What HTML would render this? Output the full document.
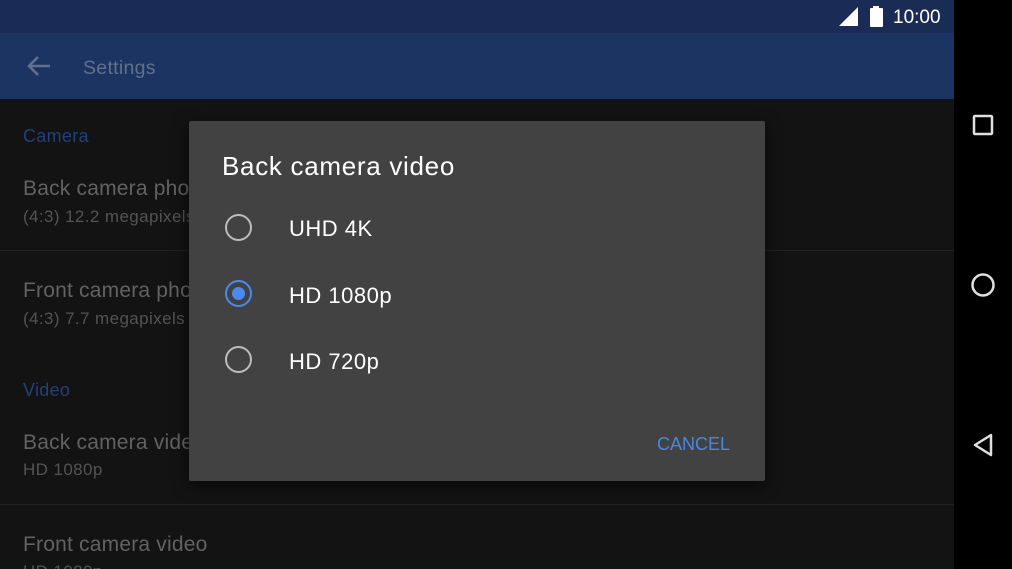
<!DOCTYPE html>
<html><head><meta charset="utf-8"><style>
*{margin:0;padding:0;box-sizing:border-box}
body{width:1012px;height:569px;overflow:hidden;background:#000;font-family:"Liberation Sans",sans-serif;position:relative}
.main{position:absolute;left:0;top:0;width:954px;height:569px;background:#131313;overflow:hidden}
.status{position:absolute;left:0;top:0;width:954px;height:33px;background:#1a2b55}
.appbar{position:absolute;left:0;top:33px;width:954px;height:66px;background:#1b3462}
.t{position:absolute;white-space:nowrap}
.cat{color:#22407a;font-size:18px;letter-spacing:.3px}
.pri{color:#626262;font-size:21px;letter-spacing:.2px}
.sec{color:#535353;font-size:17px;letter-spacing:.4px}
.div{position:absolute;left:0;width:954px;height:1px;background:#202020}
.dlg{position:absolute;left:189px;top:121px;width:576px;height:360px;background:#424242;border-radius:2px;box-shadow:0 4px 16px rgba(0,0,0,.6)}
.radio{position:absolute;left:225px;width:27px;height:27px;border:2.5px solid #bdbdbd;border-radius:50%}
.opt{position:absolute;left:289px;color:#fff;font-size:22px;letter-spacing:.5px}
</style></head><body>
<div class="main">
<div class="status">
<svg style="position:absolute;left:838px;top:7px" width="22" height="20"><polygon points="20,0 20,19 1,19" fill="#fff"/></svg>
<svg style="position:absolute;left:870px;top:6px" width="14" height="21"><rect x="3" y="0" width="6" height="3" fill="#fff"/><rect x="0" y="2" width="13" height="19" rx="1" fill="#fff"/></svg>
<div class="t" style="left:893px;top:7px;color:#fff;font-size:19px">10:00</div>
</div>
<div class="appbar">
<svg style="position:absolute;left:26px;top:22px" width="26" height="22"><path d="M24 11H3M12 2L3 11l9 9" stroke="#62708c" stroke-width="2.6" fill="none"/></svg>
<div class="t" style="left:83px;top:24px;color:#62708c;font-size:19.5px;letter-spacing:.3px">Settings</div>
</div>
<div class="t cat" style="left:23px;top:126px">Camera</div>
<div class="t pri" style="left:23px;top:177px">Back camera photo</div>
<div class="t sec" style="left:23px;top:207px">(4:3) 12.2 megapixels</div>
<div class="div" style="top:250px"></div>
<div class="t pri" style="left:23px;top:279px">Front camera photo</div>
<div class="t sec" style="left:23px;top:309px">(4:3) 7.7 megapixels</div>
<div class="t cat" style="left:23px;top:380px">Video</div>
<div class="t pri" style="left:23px;top:431px">Back camera video</div>
<div class="t sec" style="left:23px;top:460px">HD 1080p</div>
<div class="div" style="top:504px"></div>
<div class="t pri" style="left:23px;top:533px">Front camera video</div>
<div class="t sec" style="left:23px;top:562px">HD 1080p</div>
<div class="dlg"></div>
<div class="t" style="left:222px;top:151px;color:#fff;font-size:26px;letter-spacing:.7px">Back camera video</div>
<div class="radio" style="top:214px"></div>
<div class="opt" style="top:216px">UHD 4K</div>
<div class="radio" style="top:280px;border-color:#4a8af0"><div style="position:absolute;left:4.5px;top:4.5px;width:13px;height:13px;border-radius:50%;background:#4a8af0"></div></div>
<div class="opt" style="top:283px">HD 1080p</div>
<div class="radio" style="top:346px"></div>
<div class="opt" style="top:349px">HD 720p</div>
<div class="t" style="left:657px;top:434px;color:#4a87e0;font-size:18px">CANCEL</div>
</div>
<svg style="position:absolute;left:972px;top:114px" width="22" height="22"><rect x="2" y="2" width="18" height="18" rx="1" stroke="#e0e0e0" stroke-width="2.5" fill="none"/></svg>
<svg style="position:absolute;left:970px;top:272px" width="26" height="26"><circle cx="13" cy="13" r="10.5" stroke="#e0e0e0" stroke-width="2.5" fill="none"/></svg>
<svg style="position:absolute;left:971px;top:432px" width="24" height="26"><path d="M20 3L4 13l16 10z" stroke="#e0e0e0" stroke-width="2.5" fill="none" stroke-linejoin="round"/></svg>
</body></html>
